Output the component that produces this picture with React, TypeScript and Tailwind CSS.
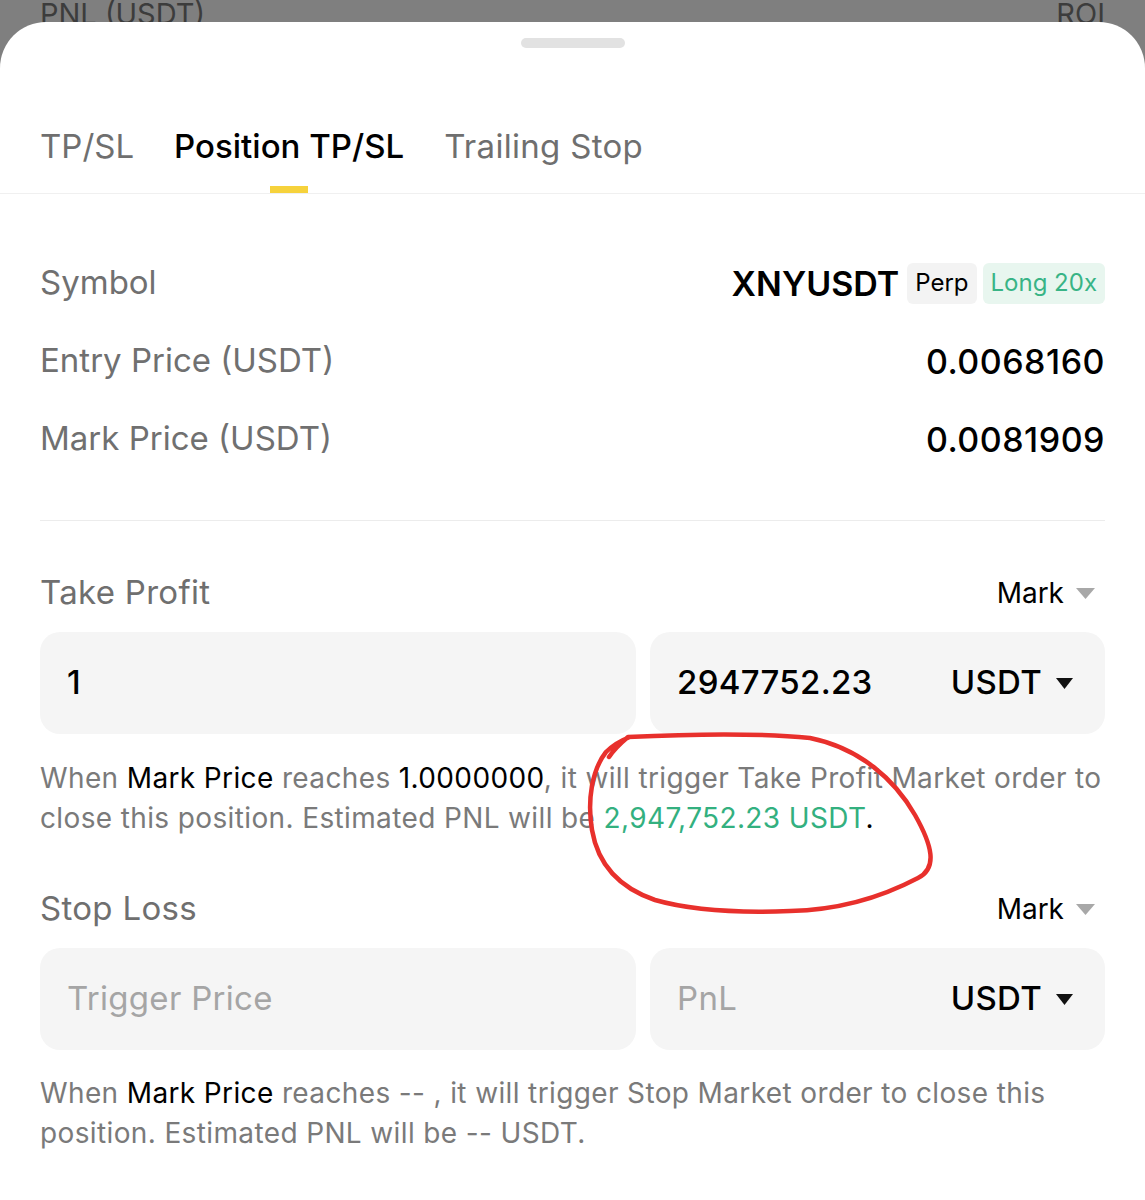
import React from "react";

const font = { fontFamily: "Inter, 'Liberation Sans', sans-serif" };

function Row({ label, children }: { label: string; children: React.ReactNode }) {
  return (
    <div className="flex h-[78px] items-center justify-between">
      <span className="text-[33px] text-[#707070]">{label}</span>
      <div className="flex items-center">{children}</div>
    </div>
  );
}

function SectionHead({ title }: { title: string }) {
  return (
    <div className="flex h-[40px] items-center justify-between">
      <span className="text-[33px] tracking-[0.3px] text-[#6f6f6f]">{title}</span>
      <div className="flex items-center gap-[12px] pr-[10px]">
        <span className="text-[28px] text-black">Mark</span>
        <svg width="19" height="11" viewBox="0 0 19 11">
          <path d="M0 0 L19 0 L9.5 11 Z" fill="#a8a8a8" />
        </svg>
      </div>
    </div>
  );
}

function Caret() {
  return (
    <svg width="17" height="11" viewBox="0 0 17 11">
      <path d="M0 0 L17 0 L8.5 11 Z" fill="#111" />
    </svg>
  );
}

function Inputs({ left, leftMuted, right, rightMuted }: { left: string; leftMuted?: boolean; right: string; rightMuted?: boolean }) {
  return (
    <div className="flex gap-[14px]">
      <div className="flex h-[102px] w-[596px] items-center rounded-[20px] bg-[#f5f5f5] px-[27px]">
        <span className={leftMuted ? "text-[33px] tracking-[0.3px] text-[#a5a5a5]" : "text-[33px] font-medium text-black"}>{left}</span>
      </div>
      <div className="flex h-[102px] flex-1 items-center justify-between rounded-[20px] bg-[#f5f5f5] pl-[27px] pr-[32px]">
        <span className={rightMuted ? "text-[33px] tracking-[0.3px] text-[#a5a5a5]" : "text-[33px] font-medium tracking-[0.3px] text-black"}>{right}</span>
        <div className="flex items-center gap-[14px]">
          <span className="text-[33px] font-medium tracking-[0.3px] text-black">USDT</span>
          <Caret />
        </div>
      </div>
    </div>
  );
}

export default function App() {
  return (
    <div className="relative h-[1200px] w-[1145px] overflow-hidden bg-[#7f7f7f]" style={font}>
      {/* backdrop header */}
      <div className="h-[22px] overflow-hidden">
        <div className="-mt-[6px] flex justify-between px-[40px] text-[29px] leading-[40px] text-[#3c3c3c]">
          <span>PNL (USDT)</span>
          <span>ROI</span>
        </div>
      </div>

      {/* sheet */}
      <div className="h-[1178px] rounded-t-[46px] bg-white">
        <div className="flex justify-center pt-[16px]">
          <div className="h-[10px] w-[104px] rounded-full bg-[#e2e2e2]" />
        </div>

        {/* tabs */}
        <div className="mt-[78px] flex gap-[40px] border-b border-[#f0f0f0] px-[40px]">
          <div className="flex flex-col items-center">
            <span className="text-[33px] leading-[40px] text-[#6f6f6f]">TP/SL</span>
            <div className="mt-[20px] h-[7px]" />
          </div>
          <div className="flex flex-col items-center">
            <span className="text-[33px] font-medium leading-[40px] text-black">Position TP/SL</span>
            <div className="mt-[20px] h-[7px] w-[38px] bg-[#f6d23c]" />
          </div>
          <div className="flex flex-col items-center">
            <span className="text-[33px] tracking-[0.3px] leading-[40px] text-[#6f6f6f]">Trailing Stop</span>
            <div className="mt-[20px] h-[7px]" />
          </div>
        </div>

        <div className="px-[40px]">
          <div className="pt-[50px]">
            <Row label="Symbol">
              <span className="text-[34px] font-semibold text-black">XNYUSDT</span>
              <span className="ml-[8px] flex h-[41px] items-center rounded-[6px] bg-[#f3f3f3] px-[8px] text-[24px] text-black">Perp</span>
              <span className="ml-[6px] flex h-[41px] items-center rounded-[6px] bg-[#e8f6ef] px-[8px] text-[24px] text-[#38b486]">Long 20x</span>
            </Row>
            <Row label="Entry Price (USDT)">
              <span className="text-[34px] font-medium tracking-[0.5px] text-black">0.0068160</span>
            </Row>
            <Row label="Mark Price (USDT)">
              <span className="text-[34px] font-medium tracking-[0.5px] text-black">0.0081909</span>
            </Row>
          </div>

          <div className="mt-[42px] h-px bg-[#ececec]" />

          {/* take profit */}
          <div className="mt-[52px]">
            <SectionHead title="Take Profit" />
          </div>
          <div className="mt-[19px]">
            <Inputs left="1" right="2947752.23" />
          </div>
          <p className="mt-[24px] text-[28px] tracking-[0.37px] leading-[40px] text-[#7a7a7a]">
            When <span className="text-black">Mark Price</span> reaches <span className="text-black">1.0000000</span>, it will trigger Take Profit Market order to close this position. Estimated PNL will be{" "}
            <span className="text-[#33b07f]">2,947,752.23 USDT</span>
            <span className="text-black">.</span>
          </p>

          {/* stop loss */}
          <div className="mt-[51px]">
            <SectionHead title="Stop Loss" />
          </div>
          <div className="mt-[19px]">
            <Inputs left="Trigger Price" leftMuted right="PnL" rightMuted />
          </div>
          <p className="mt-[23px] text-[28px] tracking-[0.37px] leading-[40px] text-[#7a7a7a]">
            When <span className="text-black">Mark Price</span> reaches -- , it will trigger Stop Market order to close this position. Estimated PNL will be -- USDT.
          </p>
        </div>
      </div>

      {/* hand-drawn red annotation */}
      <svg className="pointer-events-none absolute left-0 top-0" width="1145" height="1200" viewBox="0 0 1145 1200">
        <path
          d="M609 757 C615 748 622 742 628 737 C690 734 760 733 810 738 C860 748 895 780 915 815 C932 845 938 868 918 878 C880 898 840 910 790 911 C740 913 690 910 655 900 C620 888 598 865 592 830 C587 800 592 770 606 752 C614 744 622 740 630 737"
          fill="none"
          stroke="#e8302c"
          strokeWidth="4.5"
          strokeLinecap="round"
          strokeLinejoin="round"
        />
      </svg>
    </div>
  );
}
